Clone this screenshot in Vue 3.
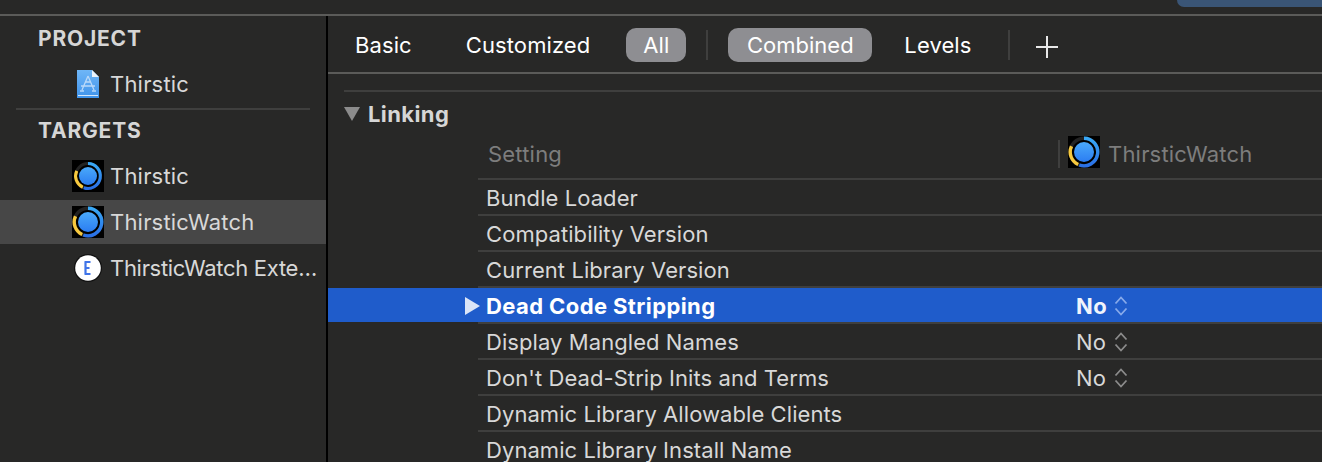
<script setup>
const rows = [
  { name: 'Bundle Loader' },
  { name: 'Compatibility Version' },
  { name: 'Current Library Version' },
  { name: 'Dead Code Stripping', value: 'No', selected: true },
  { name: 'Display Mangled Names', value: 'No' },
  { name: "Don't Dead-Strip Inits and Terms", value: 'No' },
  { name: 'Dynamic Library Allowable Clients' },
  { name: 'Dynamic Library Install Name' },
]
const targets = [
  { name: 'Thirstic', type: 'app' },
  { name: 'ThirsticWatch', type: 'app', active: true },
  { name: 'ThirsticWatch Exte…', type: 'ext' },
]
</script>

<template>
  <div class="page">
    <div class="topbar"><div class="tab"></div></div>
    <div class="body">
      <aside class="sidebar">
        <div class="group first">PROJECT</div>
        <div class="item">
          <span class="slot">
            <svg width="24" height="30" viewBox="0 0 24 30">
              <defs>
                <linearGradient id="doc" x1="0" y1="0" x2="0" y2="1">
                  <stop offset="0" stop-color="#6fb6f7" />
                  <stop offset="1" stop-color="#3f93ea" />
                </linearGradient>
              </defs>
              <path d="M1 1h15l7 7v21H1z" fill="url(#doc)" />
              <path d="M16 1l7 7h-7z" fill="#eaf3fc" />
              <path d="M2 26.500h20" stroke="#d5e8fb" stroke-width="1" />
              <path d="M12 7l-6 14M12 7l6 14M5 17h14M4 22h4M16 22h4M9 13h6" stroke="#b9d9f9" stroke-width="1.300" fill="none" />
            </svg>
          </span>
          <span class="label">Thirstic</span>
        </div>
        <div class="sep"></div>
        <div class="group second">TARGETS</div>
        <div v-for="t in targets" :key="t.name" class="item" :class="{ active: t.active }">
          <span class="slot">
            <svg v-if="t.type === 'app'" width="32" height="32" viewBox="0 0 32 32">
              <defs>
                <linearGradient id="core" x1="0" y1="0" x2="0" y2="1">
                  <stop offset="0" stop-color="#4aa9fa" />
                  <stop offset="1" stop-color="#2b7df2" />
                </linearGradient>
                <linearGradient id="ring" x1="0" y1="0" x2="0" y2="1">
                  <stop offset="0" stop-color="#38a8f6" />
                  <stop offset="1" stop-color="#2a70e6" />
                </linearGradient>
              </defs>
              <rect width="32" height="32" fill="#000" />
              <g :class="{ inset: !t.active }">
                <circle cx="16" cy="16" r="13.800" fill="none" stroke="#232323" stroke-width="3.400" />
                <path d="M16 2.200A13.800 13.800 0 1 1 11.300 29" fill="none" stroke="url(#ring)" stroke-width="3.400" />
                <path d="M10.200 28.500A13.800 13.800 0 0 1 3.500 10.200" fill="none" stroke="#f7c93e" stroke-width="3.400" />
                <circle cx="16" cy="16" r="10" fill="url(#core)" />
              </g>
            </svg>
            <svg v-else width="28" height="28" viewBox="0 0 28 28">
              <circle cx="14" cy="14" r="14" fill="#111" />
              <circle cx="14" cy="14" r="12.800" fill="#fff" />
              <path d="M10.500 8h6M10.500 14h5M10.500 20h6M11.500 8v12" stroke="#3f74e8" stroke-width="2.200" fill="none" />
            </svg>
          </span>
          <span class="label" :class="{ tight: t.type === 'ext' }">{{ t.name }}</span>
        </div>
      </aside>

      <main class="main">
        <header class="filters">
          <span class="flt basic">Basic</span>
          <span class="flt custom">Customized</span>
          <span class="pill all">All</span>
          <span class="vdiv first"></span>
          <span class="pill combined">Combined</span>
          <span class="flt levels">Levels</span>
          <span class="vdiv second"></span>
          <svg class="plus" width="22" height="22" viewBox="0 0 22 22">
            <path d="M11 0v22M0 11h22" stroke="#e8e8e8" stroke-width="2" />
          </svg>
        </header>

        <section class="content">
          <div class="sectionline"></div>
          <div class="section">
            <span class="tri"></span>
            <span>Linking</span>
          </div>
          <div class="colhead">
            <span class="colname">Setting</span>
            <span class="coltarget">
              <span class="coldiv"></span>
              <svg width="32" height="32" viewBox="0 0 32 32">
                <rect width="32" height="32" fill="#000" />
                <circle cx="16" cy="16" r="13.800" fill="none" stroke="#232323" stroke-width="3.400" />
                <path d="M16 2.200A13.800 13.800 0 1 1 11.300 29" fill="none" stroke="url(#ring)" stroke-width="3.400" />
                <path d="M10.200 28.500A13.800 13.800 0 0 1 3.500 10.200" fill="none" stroke="#f7c93e" stroke-width="3.400" />
                <circle cx="16" cy="16" r="10" fill="url(#core)" />
              </svg>
              <span class="coltext">ThirsticWatch</span>
            </span>
          </div>
          <div v-for="r in rows" :key="r.name" class="row" :class="{ selected: r.selected }">
            <span v-if="r.selected" class="disclosure"></span>
            <span class="name">{{ r.name }}</span>
            <span v-if="r.value" class="value">
              <span>{{ r.value }}</span>
              <svg width="14" height="22" viewBox="0 0 14 22">
                <path d="M1.500 8.500L7 2.500l5.500 6M1.500 13.500L7 19.500l5.500-6" fill="none" stroke="currentColor" stroke-width="1.800" />
              </svg>
            </span>
          </div>
        </section>
      </main>
    </div>
  </div>
</template>

<style>
html, body { margin: 0; background: #282827; overflow: hidden; }
</style>

<style scoped>
.page {
  width: 1322px;
  height: 462px;
  overflow: hidden;
  background: #282827;
  font-family: Inter, "Liberation Sans", sans-serif;
  font-size: 22px;
  color: #dcdcdc;
  display: flex;
  flex-direction: column;
}
.topbar {
  height: 14px;
  flex: none;
  border-bottom: 2px solid #5b5b59;
  display: flex;
  justify-content: flex-end;
}
.tab {
  width: 145px;
  height: 7px;
  background: #3a5576;
  border-bottom-left-radius: 8px;
}
.body { flex: 1; display: flex; min-height: 0; }

.sidebar {
  width: 326px;
  flex: none;
  border-right: 2px solid #000;
  letter-spacing: 0.2px;
}
.group {
  padding-left: 38px;
  font-weight: 700;
  font-size: 21px;
  letter-spacing: 0.8px;
  color: #d6d6d6;
}
.group.first { height: 46px; line-height: 46px; }
.group.second { height: 44px; line-height: 42px; }
.item {
  height: 44px;
  margin-bottom: 2px;
  display: flex;
  align-items: center;
  color: #d8d8d8;
}
.item.active { background: #474747; }
.slot {
  width: 32px;
  height: 32px;
  flex: none;
  margin-left: 72px;
  margin-right: 6px;
  display: flex;
  align-items: center;
  justify-content: center;
}
.label { flex: none; white-space: nowrap; }
.label.tight { letter-spacing: -0.3px; }
.inset {
  transform: scale(0.9);
  transform-origin: 16px 16px;
}
.sep {
  height: 2px;
  background: #3f3f3e;
  margin: 0 16px;
}

.main { flex: 1; min-width: 0; }
.filters {
  height: 54px;
  padding-top: 2px;
  border-bottom: 2px solid #5b5b59;
  display: flex;
  align-items: center;
  color: #fff;
  letter-spacing: 0.1px;
}
.flt { flex: none; }
.basic { margin-left: 27px; }
.custom { margin-left: 54px; }
.pill {
  height: 34px;
  line-height: 34px;
  border-radius: 10px;
  background: #8e8e92;
  text-align: center;
  flex: none;
}
.all { width: 60px; margin-left: 36px; }
.vdiv { width: 2px; height: 30px; background: #3f3f3e; flex: none; }
.vdiv.first { margin-left: 20px; }
.combined { width: 144px; margin-left: 20px; letter-spacing: 0; }
.levels { margin-left: 32px; }
.vdiv.second { margin-left: 36px; }
.plus { margin-left: 26px; margin-top: 4px; flex: none; }

.content { padding-left: 16px; }
.sectionline { height: 2px; background: #3f3f3e; margin-top: 16px; }
.section {
  height: 44px;
  display: flex;
  align-items: center;
  font-weight: 700;
  letter-spacing: 0.4px;
  color: #d6d6d6;
  gap: 8px;
}
.tri {
  width: 0;
  height: 0;
  border-left: 8px solid transparent;
  border-right: 8px solid transparent;
  border-top: 14px solid #8c8c8c;
}
.colhead {
  height: 42px;
  margin-left: 134px;
  border-bottom: 2px solid #3f3f3e;
  display: flex;
  align-items: flex-start;
  color: #7d7d7d;
}
.colname { margin-left: 10px; width: 570px; line-height: 36px; letter-spacing: 0.2px; }
.coltarget {
  height: 32px;
  display: flex;
  align-items: center;
  letter-spacing: 0.2px;
}
.coldiv {
  width: 2px;
  height: 28px;
  align-self: flex-end;
  background: #3f3f3e;
  margin-right: 8px;
}
.coltext { margin-left: 8px; padding-top: 4px; line-height: 28px; }
.row {
  height: 32px;
  padding-top: 2px;
  margin-left: 134px;
  border-bottom: 2px solid #3f3f3e;
  display: flex;
  align-items: center;
  position: relative;
  color: #d8d8d8;
  line-height: 1;
  letter-spacing: 0.07px;
}
.name { margin-left: 8px; width: 590px; flex: none; }
.value { display: flex; align-items: center; gap: 8px; color: #d8d8d8; }
.value svg { color: #8c8c8c; }
.row.selected {
  margin-left: -16px;
  padding-left: 150px;
  margin-bottom: 2px;
  border-bottom: none;
  background: #1f5ccb;
  color: #fff;
  font-weight: 700;
  letter-spacing: 0.4px;
}
.row.selected::after {
  content: "";
  position: absolute;
  left: 150px;
  right: 0;
  bottom: -2px;
  height: 2px;
  background: #3f3f3e;
}
.selected .value { color: #f0f4fc; gap: 7px; }
.selected .value svg { color: #88aaea; }
.disclosure {
  position: absolute;
  left: 137px;
  top: 9px;
  width: 0;
  height: 0;
  border-top: 9px solid transparent;
  border-bottom: 9px solid transparent;
  border-left: 15px solid #dbe5f7;
}
</style>
